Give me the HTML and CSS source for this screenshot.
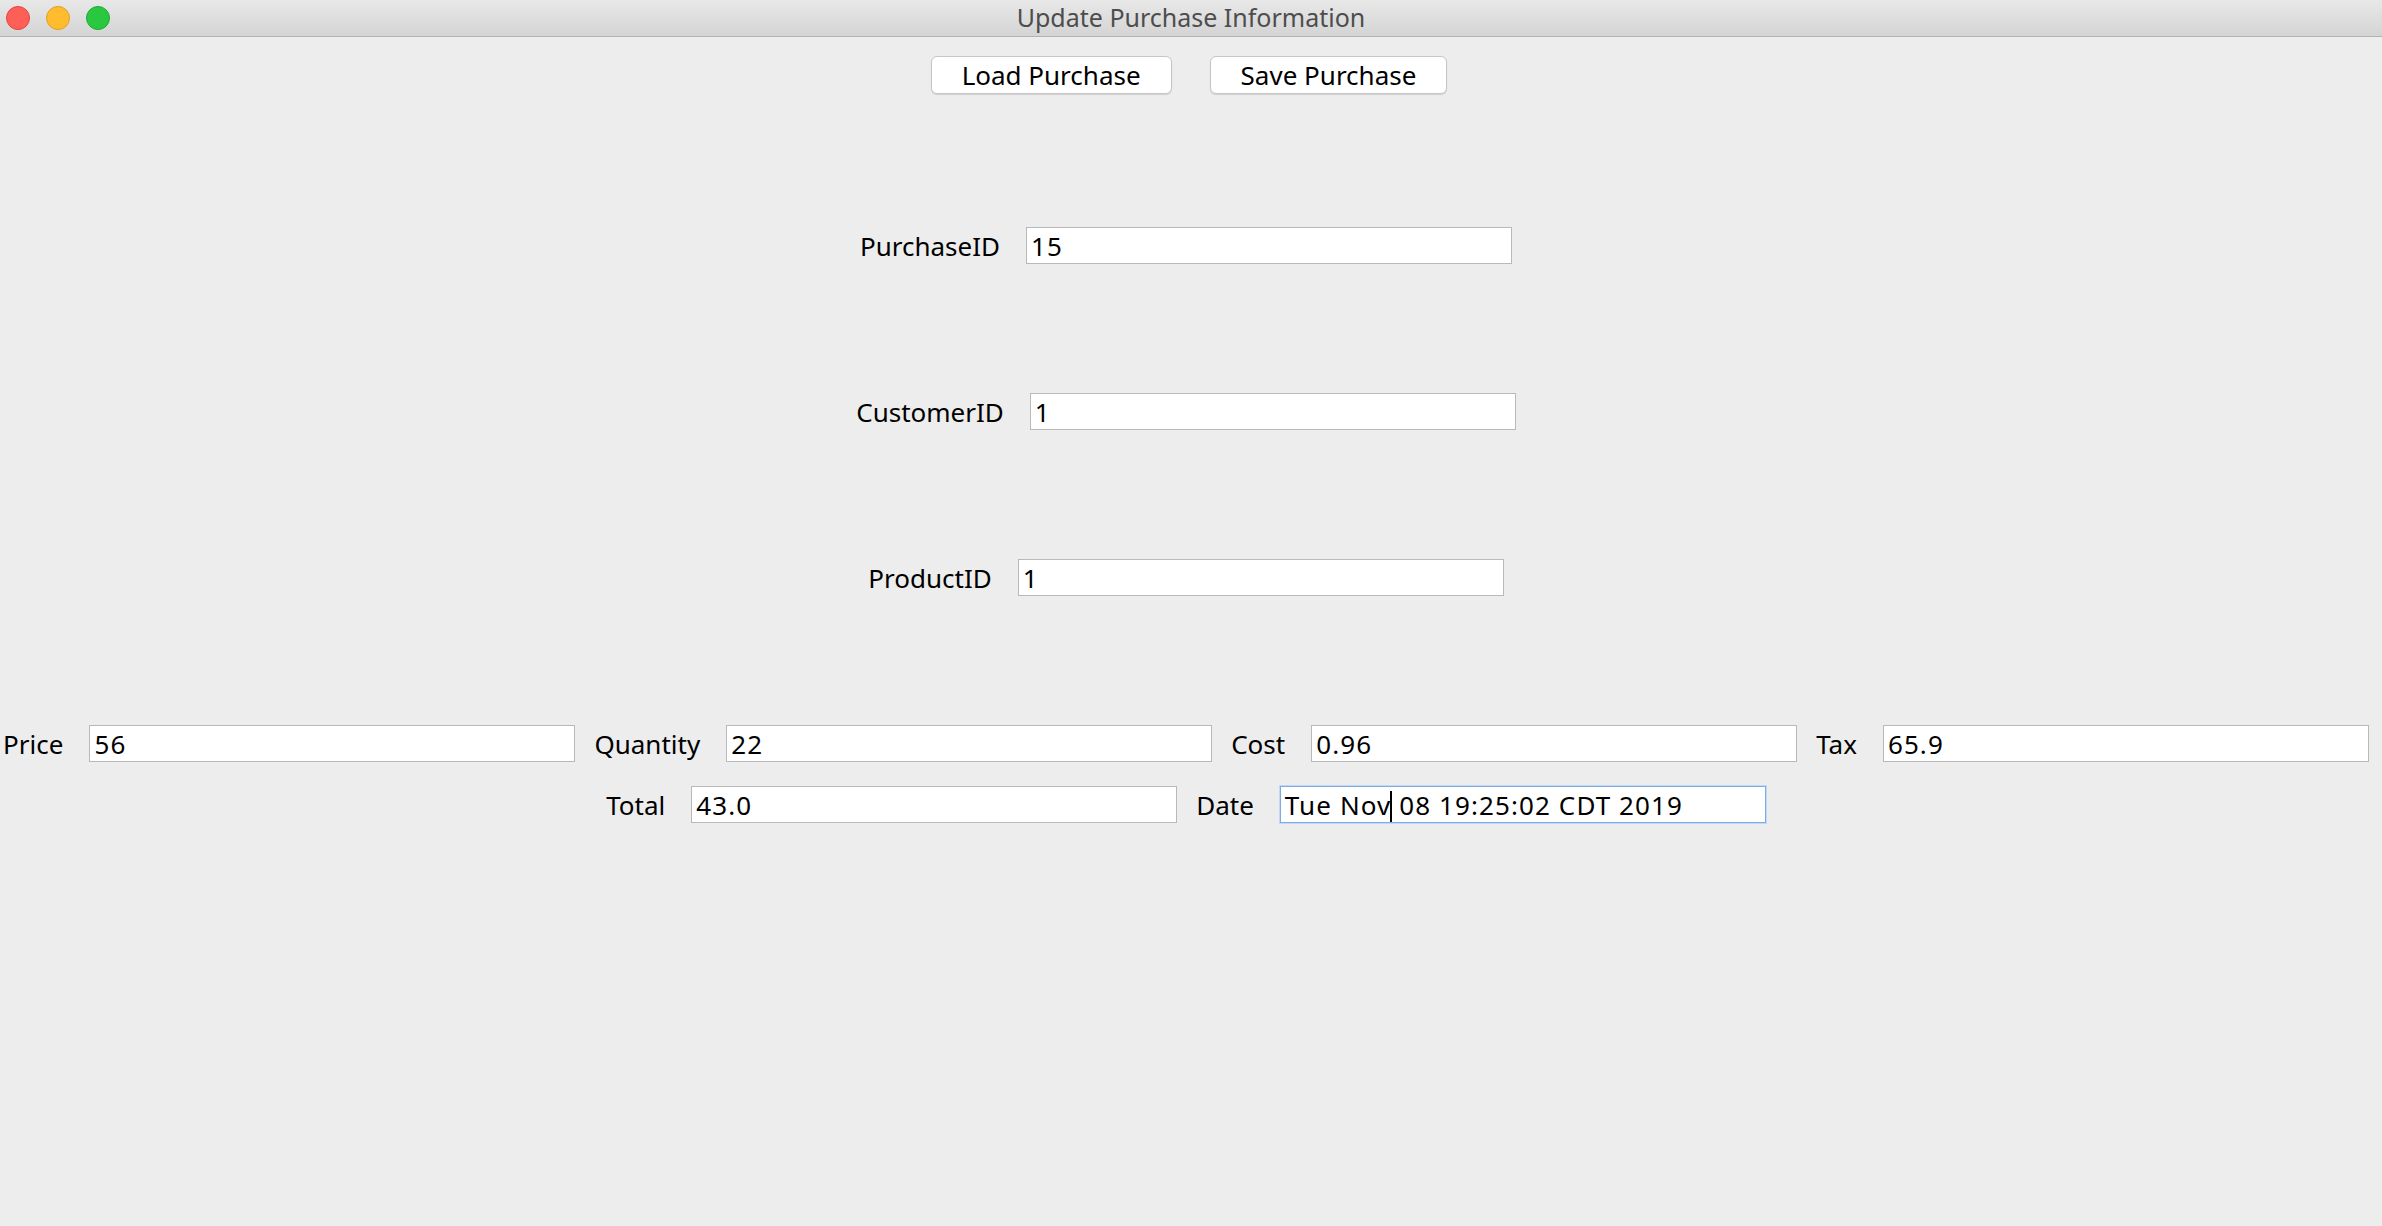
FILE: index.html
```html
<!DOCTYPE html>
<html lang="en">
<head>
<meta charset="utf-8">
<title>Update Purchase Information</title>
<link rel="stylesheet" href="styles.css">
</head>
<body>
<div class="window">
  <div class="titlebar">
    <div class="lights">
      <span class="light red"></span>
      <span class="light yellow"></span>
      <span class="light green"></span>
    </div>
    <div class="title">Update Purchase Information</div>
    <div class="spacer"></div>
  </div>
  <div class="content">
    <div class="toolbar">
      <button class="btn">Load Purchase</button>
      <button class="btn">Save Purchase</button>
    </div>
    <div class="form">
      <div class="row row-first">
        <div class="group"><span class="label">PurchaseID</span><div class="field">15</div></div>
      </div>
      <div class="row row-gap">
        <div class="group"><span class="label">CustomerID</span><div class="field">1</div></div>
      </div>
      <div class="row row-gap">
        <div class="group"><span class="label">ProductID</span><div class="field">1</div></div>
      </div>
      <div class="row row-gap">
        <div class="group"><span class="label">Price</span><div class="field">56</div></div>
        <div class="group"><span class="label">Quantity</span><div class="field">22</div></div>
        <div class="group"><span class="label">Cost</span><div class="field">0.96</div></div>
        <div class="group"><span class="label">Tax</span><div class="field">65.9</div></div>
      </div>
      <div class="row row-tight">
        <div class="group"><span class="label">Total</span><div class="field">43.0</div></div>
        <div class="group"><span class="label">Date</span><div class="field focused">Tue Nov<span class="caret"></span> 08 19:25:02 CDT 2019</div></div>
      </div>
    </div>
  </div>
</div>
</body>
</html>
```

FILE: styles.css
```css
html, body {
  margin: 0;
  padding: 0;
  background: #ededed;
}

.window {
  width: 2382px;
  height: 1226px;
  background: #ededed;
  font-family: "Noto Sans", "DejaVu Sans", sans-serif;
  color: #000;
  overflow: hidden;
}

.titlebar {
  height: 36px;
  border-bottom: 1px solid #b3b3b3;
  background: linear-gradient(to bottom, #e9e8e9 0%, #d4d4d4 100%);
  display: grid;
  grid-template-columns: 1fr auto 1fr;
  align-items: center;
}

.lights {
  display: flex;
  gap: 16px;
  padding-left: 6px;
  align-items: center;
}

.light {
  width: 22px;
  height: 22px;
  border-radius: 50%;
  display: block;
}

.red { background: #fe5f57; border: 1px solid #e1463f; }
.yellow { background: #febc2e; border: 1px solid #dfa023; }
.green { background: #29c840; border: 1px solid #1dac2b; }

.title {
  font-size: 25px;
  line-height: 34px;
  padding-bottom: 2px;
  color: #4d4d4d;
  white-space: nowrap;
}

.content {
  display: flex;
  flex-direction: column;
}

.toolbar {
  display: flex;
  justify-content: center;
  gap: 38px;
  margin-top: 19px;
  padding-right: 4px;
}

.btn {
  height: 38px;
  padding: 0 30px;
  background: #fff;
  border: 1px solid #c6c6c6;
  border-radius: 6px;
  box-shadow: 0 1px 1px rgba(0, 0, 0, 0.12);
  font-family: "Noto Sans", "DejaVu Sans", sans-serif;
  font-size: 26px;
  color: #000;
  line-height: 36px;
}

.form {
  display: flex;
  flex-direction: column;
  padding-right: 10px;
}

.row {
  display: flex;
  justify-content: center;
  gap: 19px;
}

.row-first { margin-top: 133px; }
.row-gap { margin-top: 129px; }
.row-tight { margin-top: 24px; }

.group {
  display: flex;
  align-items: center;
  gap: 26px;
}

.label {
  font-size: 26px;
  white-space: nowrap;
}

.field {
  box-sizing: border-box;
  width: 486px;
  height: 37px;
  background: #fff;
  border: 1px solid #b9b9b9;
  padding: 2px 4px 0;
  font-size: 26px;
  letter-spacing: 1.1px;
  line-height: 33px;
  white-space: pre;
  overflow: hidden;
}

.field.focused {
  border-color: #7eaae6;
  box-shadow: 0 0 0 1px #c3d8f4;
}

.caret {
  display: inline-block;
  width: 2px;
  height: 31px;
  background: #000;
  vertical-align: middle;
  margin: -4px -1px 0 -1px;
}
```
